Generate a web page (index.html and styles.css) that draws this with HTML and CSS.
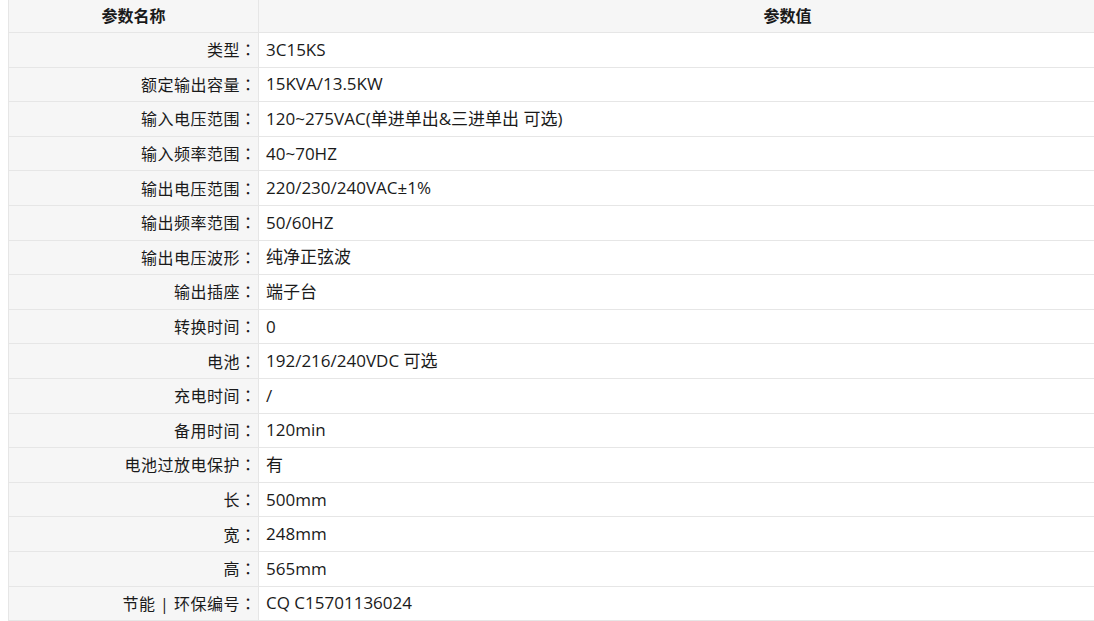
FILE: index.html
```html
<!DOCTYPE html>
<html lang="zh-CN">
<head>
<meta charset="utf-8">
<title>参数</title>
<link rel="stylesheet" href="styles.css">
</head>
<body>
<table class="spec">
  <thead>
    <tr><th class="name">参数名称</th><th class="value">参数值</th></tr>
  </thead>
  <tbody>
    <tr><td class="name">类型<span class="colon">：</span></td><td class="value">3C15KS</td></tr>
    <tr><td class="name">额定输出容量<span class="colon">：</span></td><td class="value">15KVA/13.5KW</td></tr>
    <tr><td class="name">输入电压范围<span class="colon">：</span></td><td class="value">120~275VAC(单进单出&amp;三进单出 可选)</td></tr>
    <tr><td class="name">输入频率范围<span class="colon">：</span></td><td class="value">40~70HZ</td></tr>
    <tr><td class="name">输出电压范围<span class="colon">：</span></td><td class="value">220/230/240VAC±1%</td></tr>
    <tr><td class="name">输出频率范围<span class="colon">：</span></td><td class="value">50/60HZ</td></tr>
    <tr><td class="name">输出电压波形<span class="colon">：</span></td><td class="value">纯净正弦波</td></tr>
    <tr><td class="name">输出插座<span class="colon">：</span></td><td class="value">端子台</td></tr>
    <tr><td class="name">转换时间<span class="colon">：</span></td><td class="value">0</td></tr>
    <tr><td class="name">电池<span class="colon">：</span></td><td class="value">192/216/240VDC 可选</td></tr>
    <tr><td class="name">充电时间<span class="colon">：</span></td><td class="value">/</td></tr>
    <tr><td class="name">备用时间<span class="colon">：</span></td><td class="value">120min</td></tr>
    <tr><td class="name">电池过放电保护<span class="colon">：</span></td><td class="value">有</td></tr>
    <tr><td class="name">长<span class="colon">：</span></td><td class="value">500mm</td></tr>
    <tr><td class="name">宽<span class="colon">：</span></td><td class="value">248mm</td></tr>
    <tr><td class="name">高<span class="colon">：</span></td><td class="value">565mm</td></tr>
    <tr><td class="name">节能 | 环保编号<span class="colon">：</span></td><td class="value">CQ C15701136024</td></tr>
  </tbody>
</table>
</body>
</html>
```

FILE: styles.css
```css
html, body {
  margin: 0;
  padding: 0;
  background: #ffffff;
  overflow: hidden;
}
body {
  padding-left: 8px;
  font-family: "Open Sans", "Noto Sans CJK SC", sans-serif;
  font-size: 16px;
  color: #1a1a1a;
}
.spec {
  border-collapse: collapse;
  width: 1309px;
  margin-top: -1px;
  table-layout: fixed;
}
.spec th, .spec td {
  border: 1px solid #e6e6e6;
  padding: 0;
  line-height: 20px;
}
.spec th {
  height: 32px;
  background: #f6f6f6;
  font-weight: bold;
  text-align: center;
}
.spec td {
  height: 33.6px;
}
.spec .name {
  width: 249px;
}
.spec td.name {
  background: #f6f6f6;
  text-align: right;
  padding-right: 2px;
  letter-spacing: 0.5px;
}
.colon {
  font-family: "Noto Sans CJK JP", sans-serif;
  font-feature-settings: "locl" 0;
  letter-spacing: 0;
}
.spec td.value {
  background: #ffffff;
  text-align: left;
  padding-left: 7px;
  font-size: 17px;
}
```
